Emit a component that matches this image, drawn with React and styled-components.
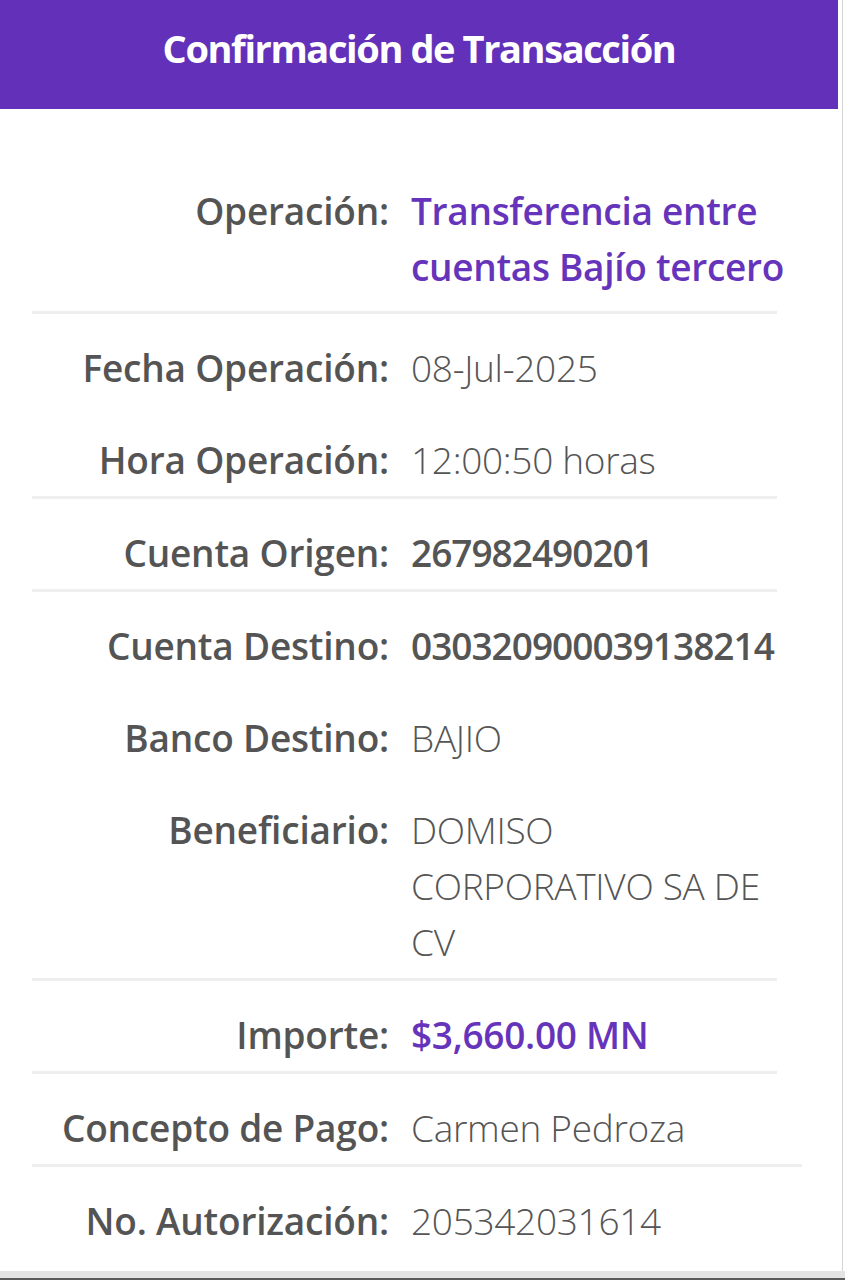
import React from 'react';
import styled, { createGlobalStyle } from 'styled-components';

const GlobalStyle = createGlobalStyle`
  html, body {
    margin: 0;
    padding: 0;
    background: #ffffff;
  }
  body {
    font-family: "Open Sans", "Noto Sans", sans-serif;
  }
`;

const Page = styled.div`
  width: 845px;
  height: 1280px;
  overflow: hidden;
  display: flex;
  flex-direction: column;
  background: #ffffff;
`;

const Card = styled.div`
  width: 842px;
  flex: 1;
  border-right: 1px solid #d4d4d4;
  display: flex;
  flex-direction: column;
`;

const Header = styled.div`
  width: 838px;
  height: 109px;
  background: #6331b9;
  display: flex;
  align-items: center;
  justify-content: center;
`;

const Title = styled.h1`
  margin: 0;
  color: #ffffff;
  font-size: 38px;
  font-weight: 700;
  letter-spacing: -1.4px;
  padding-bottom: 14px;
`;

const Body = styled.div`
  flex: 1;
  padding: 74px 0 0 32px;
`;

const Section = styled.div`
  width: ${p => (p.wide ? '770px' : '745px')};
  display: flex;
  flex-direction: column;
  gap: 36px;
  padding: ${p => (p.first ? '0' : '26px')} 0 ${p => (p.first ? '16px' : p.last ? '0' : '8px')};
  border-bottom: ${p => (p.last ? 'none' : '3px solid #eeeeee')};
`;

const Item = styled.div`
  display: grid;
  grid-template-columns: 357px 385px;
  column-gap: 22px;
  font-size: 37px;
  line-height: 56px;
`;

const Label = styled.div`
  text-align: right;
  font-weight: 600;
  color: #545454;
  white-space: nowrap;
  letter-spacing: -0.2px;
`;

const Value = styled.div`
  color: ${p => (p.accent ? '#6634bb' : '#555555')};
  font-weight: ${p => (p.accent || p.bold ? 600 : 300)};
  letter-spacing: ${p => (p.bold ? '-1px' : '-0.3px')};
`;

const BottomBar = styled.div`
  height: 9px;
  background: #e3e3e3;
  border-bottom: 2px solid #5a5a5a;
  box-sizing: border-box;
`;

const sections = [
  [{ label: 'Operación:', value: 'Transferencia entre cuentas Bajío tercero', accent: true }],
  [
    { label: 'Fecha Operación:', value: '08-Jul-2025' },
    { label: 'Hora Operación:', value: '12:00:50 horas' },
  ],
  [{ label: 'Cuenta Origen:', value: '267982490201', bold: true }],
  [
    { label: 'Cuenta Destino:', value: '030320900039138214', bold: true },
    { label: 'Banco Destino:', value: 'BAJIO' },
    { label: 'Beneficiario:', value: 'DOMISO CORPORATIVO SA DE CV' },
  ],
  [{ label: 'Importe:', value: '$3,660.00 MN', accent: true }],
  [{ label: 'Concepto de Pago:', value: 'Carmen Pedroza' }],
  [{ label: 'No. Autorización:', value: '205342031614' }],
];

export default function App() {
  return (
    <Page>
      <GlobalStyle />
      <Card>
        <Header>
          <Title>Confirmación de Transacción</Title>
        </Header>
        <Body>
          {sections.map((items, i) => (
            <Section
              key={i}
              first={i === 0}
              last={i === sections.length - 1}
              wide={i === sections.length - 2}
            >
              {items.map(item => (
                <Item key={item.label}>
                  <Label>{item.label}</Label>
                  <Value accent={item.accent} bold={item.bold}>{item.value}</Value>
                </Item>
              ))}
            </Section>
          ))}
        </Body>
      </Card>
      <BottomBar />
    </Page>
  );
}
